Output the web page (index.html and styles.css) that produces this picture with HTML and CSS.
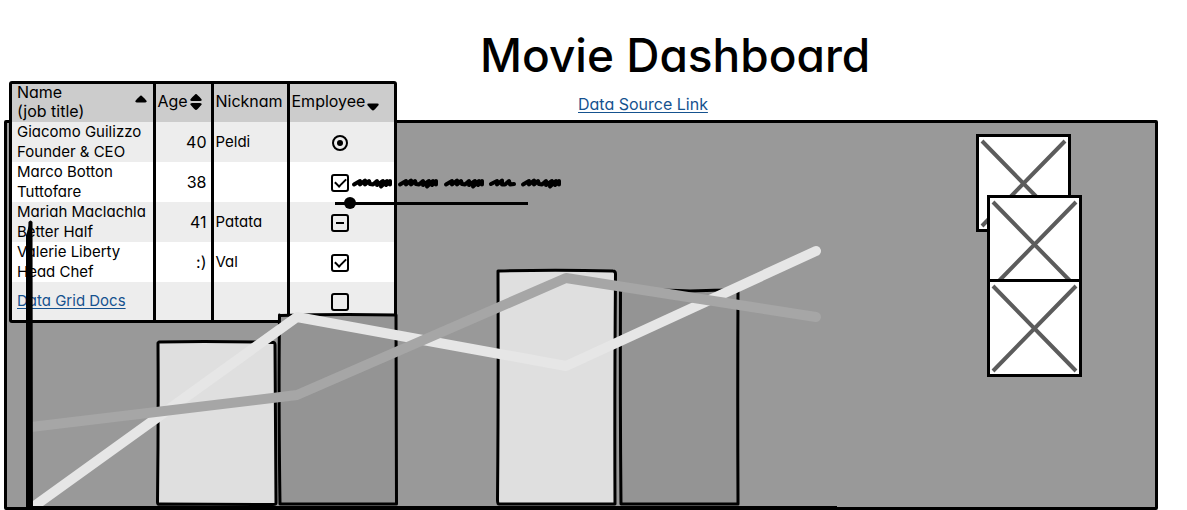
FILE: index.html
```html
<!DOCTYPE html>
<html lang="en">
<head>
<meta charset="utf-8">
<title>Movie Dashboard</title>
<link rel="stylesheet" href="styles.css">
</head>
<body>
<header class="header">
  <h1 class="title">Movie Dashboard</h1>
  <a class="link source" href="#">Data Source Link</a>
</header>
<main class="panel">
  <section class="people">
    <table class="grid">
      <colgroup><col class="col-name"><col class="col-age"><col class="col-nick"><col></colgroup>
      <thead>
        <tr>
          <th><div class="head spread"><span>Name<br>(job title)</span><svg class="sort" width="12" height="8" viewBox="0 0 12 8"><path d="M6 0.5Q7 0.5 11.7 6Q12 7.5 10 7.4H2Q0 7.5 .3 6Q5 .5 6 .5Z"/></svg></div></th>
          <th><div class="head">Age<svg width="12" height="16" viewBox="0 0 12 16"><path d="M6 0Q7 0 11.7 5.5Q12 7 10 7H2Q0 7 .3 5.5Q5 0 6 0ZM6 16Q7 16 11.7 10.5Q12 9 10 9H2Q0 9 .3 10.5Q5 16 6 16Z"/></svg></div></th>
          <th><div class="head">Nicknam</div></th>
          <th><div class="head">Employee<svg class="sort-down" width="12" height="8" viewBox="0 0 12 8"><path d="M6 7.5Q7 7.5 11.7 2Q12 .5 10 .6H2Q0 .5 .3 2Q5 7.5 6 7.5Z"/></svg></div></th>
        </tr>
      </thead>
      <tbody>
        <tr><td>Giacomo Guilizzo<br>Founder &amp; CEO</td><td class="num">40</td><td>Peldi</td><td class="pick"><input type="radio" checked aria-label="Giacomo Guilizzo is an employee"></td></tr>
        <tr><td>Marco Botton<br>Tuttofare</td><td class="num">38</td><td></td><td class="pick"><input type="checkbox" checked aria-label="Marco Botton is an employee"></td></tr>
        <tr><td>Mariah Maclachla<br>Better Half</td><td class="num">41</td><td>Patata</td><td class="pick"><input class="mixed" type="checkbox" aria-label="Mariah Maclachla is an employee"></td></tr>
        <tr><td>Valerie Liberty<br>Head Chef</td><td class="num">:)</td><td>Val</td><td class="pick"><input type="checkbox" checked aria-label="Valerie Liberty is an employee"></td></tr>
        <tr class="last"><td><a class="link" href="#">Data Grid Docs</a></td><td></td><td></td><td class="pick"><input type="checkbox" aria-label="Employee"></td></tr>
      </tbody>
    </table>
  </section>

  <svg class="scribble" width="212" height="12" viewBox="0 0 212 12" aria-hidden="true">
    <defs>
      <path id="word" d="M3 7.5L9 4L9 7.5L14 3.500L14 7.5L18 4L19 7L22 7.500L26 4L26 8L32 4L30 9.500L36 4L35 8L39 4L39 7.500"/>
      <path id="short" d="M3 7L9 4L9 7.5L14 3.500L14 7.500L17 7.500L21 4L22 7.500L26 7"/>
    </defs>
    <use href="#word"/><use href="#word" x="46"/><use href="#word" x="92"/><use href="#short" x="137"/><use href="#word" x="169"/>
  </svg>
  <input class="slider" type="range" min="0" max="100" value="5" aria-label="Range">

  <svg class="chart" width="816" height="294" viewBox="24 216 816 294" role="img" aria-label="Bar and line chart">
    <g class="bars">
      <path class="light" d="M159 342Q215 341 273 342.500Q275 342 275 345L276 503Q276 504.500 273 504.500L160 504Q157.500 505 157.500 502Q158.500 420 158 343Z"/>
      <path class="dark" d="M280 315.500Q335 314 396 315Q396.500 400 396.500 504H280Q278.500 400 279.500 315Z"/>
      <path class="light" d="M499 271Q555 269.500 613 271Q615.500 271 615.500 274Q614.500 400 615 504H499Q497.500 504 497.500 500Q498.500 390 498 271Z"/>
      <path class="dark" d="M620.500 290.500Q650 289.500 690 291Q715 290 738 290Q737.500 400 738 504H621Q620 400 620.500 290Z"/>
    </g>
    <polyline class="line line-light" points="33,507 297,317 566,366 816,251"/>
    <polyline class="line line-dark" points="31,427 297,395 566,278 816,317"/>
    <path class="axis" d="M28.500 222Q30.500 219 32.500 222L33 508H26V235Q28.500 230 28.500 222Z"/>
    <path class="base" d="M27 508H837"/>
  </svg>

  <div class="images">
    <svg class="image first" width="95" height="98" viewBox="0 0 95 98"><use href="#cross"/></svg>
    <svg class="image second" width="95" height="98" viewBox="0 0 95 98"><use href="#cross"/></svg>
    <svg class="image third" width="95" height="98" viewBox="0 0 95 98"><defs><g id="cross"><path class="frame" d="M1.500 1.500H93.500V96.500H1.500Z"/><path class="strike" d="M6 7L89 92M89 7L6 92"/></g></defs><use href="#cross"/></svg>
  </div>
</main>
</body>
</html>
```
FILE: styles.css
```css
* { box-sizing: border-box; }
body {
  margin: 0;
  min-height: 100vh;
  display: flex;
  flex-direction: column;
  position: relative;
  background: #fff;
  color: #000;
  font: 16px/20px Inter, "Open Sans", sans-serif;
  font-feature-settings: "cv11";
}
.header {
  height: 120px;
  padding: 25px 0 0 480px;
}
.title {
  margin: 0 0 9px;
  font-size: 46px;
  line-height: 60px;
  font-weight: 500;
  white-space: nowrap;
}
.link { color: #15528f; text-decoration: underline; text-underline-offset: 2px; }
.source { margin-left: 98px; }
.panel {
  flex: 1;
  min-height: 390px;
  margin: 0 29px 0 4px;
  padding: 11px 73px 0 0;
  display: flex;
  justify-content: flex-end;
  background: #999;
  border: 3px solid #000;
  border-radius: 2px;
}

/* Data grid, laid over the header and the panel */
.people {
  position: absolute;
  left: 9px;
  top: 81px;
  width: 388px;
  border: 3px solid #000;
  border-radius: 3px;
}
.grid { width: 100%; table-layout: fixed; border-collapse: collapse; background: #fff; }
.col-name { width: 142px; }
.col-age { width: 58px; }
.col-nick { width: 76px; }
th, td {
  padding: 0 0 0 2px;
  border-right: 3px solid #000;
  font-weight: 400;
  text-align: left;
  white-space: nowrap;
}
th:first-child, td:first-child { padding-left: 5px; }
th:last-child, td:last-child { border-right: 0; }
thead tr { height: 38px; background: #ccc; line-height: 19px; }
tbody { font-size: 15px; }
tbody tr { height: 40px; }
tbody tr:nth-child(odd) { background: #ededed; }
tbody .last { height: 38px; }
.head { display: flex; align-items: center; gap: 2px; margin-top: -3px; }
.spread { justify-content: space-between; padding-right: 6px; }
.sort { margin-bottom: 6px; }
.sort-down { margin-top: 10px; }
td.num { padding-right: 4px; text-align: right; font-size: 16px; }
td.pick { padding: 0 3px 0 0; text-align: center; }
.pick input {
  appearance: none;
  display: inline-grid;
  place-items: center;
  width: 18px;
  height: 18px;
  margin: 0;
  border: 2px solid #000;
  border-radius: 3px;
  vertical-align: middle;
}
.pick input[type="radio"] { width: 16px; height: 16px; border-radius: 50%; }
.pick input[type="radio"]::before { content: ""; width: 6px; height: 6px; border-radius: 50%; background: #000; }
.pick input[type="checkbox"]:checked::before {
  content: "";
  width: 9px;
  height: 5px;
  margin-bottom: 3px;
  border: solid #000;
  border-width: 0 0 2px 2px;
  transform: rotate(-45deg);
}
.pick .mixed::before { content: ""; width: 8px; height: 2px; background: #000; }

.scribble { position: absolute; left: 351px; top: 177px; fill: none; stroke: #000; stroke-width: 4; stroke-linecap: round; stroke-linejoin: round; }
.slider {
  position: absolute;
  left: 335px;
  top: 196px;
  width: 193px;
  height: 14px;
  margin: 0;
  appearance: none;
  background: linear-gradient(#000, #000) center / 100% 3px no-repeat;
}
.slider::-webkit-slider-thumb { appearance: none; width: 12px; height: 12px; border-radius: 50%; background: #000; }

.chart { position: absolute; left: 24px; bottom: 0; }
.bars { stroke: #000; stroke-width: 3; stroke-linejoin: round; }
.light { fill: #dfdfdf; }
.dark { fill: #949494; }
.line { fill: none; stroke-width: 10; stroke-linecap: round; stroke-linejoin: round; }
.line-light { stroke: #e6e6e6; }
.line-dark { stroke: #a6a6a6; }
.base { stroke: #000; stroke-width: 4; }

.images { display: flex; flex-direction: column; }
.image { display: block; flex: none; }
.first { margin-left: -11px; }
.second { margin-top: -37px; }
.third { margin-top: -14px; }
.frame { fill: #fff; stroke: #000; stroke-width: 3; }
.strike { stroke: #5c5c5c; stroke-width: 4; }
```
